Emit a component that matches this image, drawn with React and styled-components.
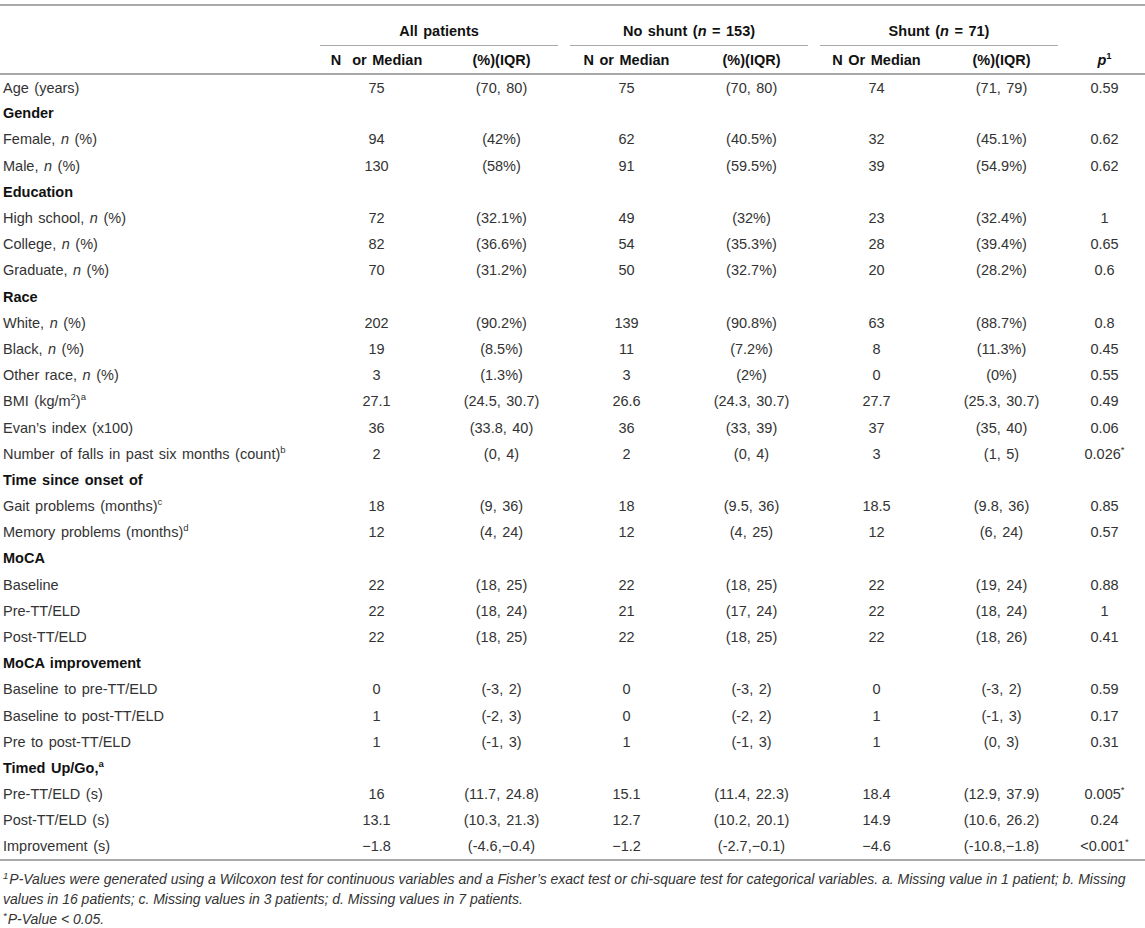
import React from 'react'
import styled, { createGlobalStyle } from 'styled-components'

const Global = createGlobalStyle`
  html, body { margin: 0; padding: 0; background: #fff; }
  body { font-family: "Liberation Sans", Arial, Helvetica, sans-serif; color: #333; }
`

const Page = styled.div`
  width: 1145px;
  padding-top: 4px;
`

const Table = styled.table`
  width: 1145px;
  border-collapse: collapse;
  table-layout: fixed;
  border-top: 2px solid #a9a9a9;
  border-bottom: 2px solid #a9a9a9;
  font-size: 14.5px;
  word-spacing: 1.5px;
`

const Head = styled.thead`
  border-bottom: 2px solid #a9a9a9;
`

const GroupCell = styled.th`
  height: 40px;
  padding: 0;
  vertical-align: bottom;
  font-weight: bold;
  color: #111;
`

const GroupTitle = styled.div`
  margin: 0 ${p => p.$gap || 6}px;
  padding-bottom: 4px;
  border-bottom: ${p => (p.$line ? '1px solid #a9a9a9' : 'none')};
  text-align: center;
  line-height: 20px;
`

const SubCell = styled.th`
  height: 27px;
  padding: 0;
  font-weight: bold;
  color: #111;
  text-align: center;
  vertical-align: middle;
`

const Row = styled.tr`
  height: 26.2px;
`

const Label = styled.td`
  padding: 0 3px;
  white-space: nowrap;
  color: ${p => (p.$section ? '#111' : '#333')};
  font-weight: ${p => (p.$section ? 'bold' : 'normal')};
`

const Value = styled.td`
  padding: 0;
  text-align: center;
  white-space: nowrap;
`

const Sup = styled.sup`
  font-size: 9.5px;
  line-height: 0;
  vertical-align: ${p => p.$v || '6px'};
  margin-right: ${p => p.$gap || 0}px;
`

const Notes = styled.div`
  padding: 8px 3px 0;
  font-size: 14px;
  font-style: italic;
  line-height: 20px;
  color: #333;
`

const N = () => <i>n</i>

const rows = [
  { label: 'Age (years)', v: ['75', '(70, 80)', '75', '(70, 80)', '74', '(71, 79)', '0.59'] },
  { section: 'Gender' },
  { label: <>Female, <N /> (%)</>, v: ['94', '(42%)', '62', '(40.5%)', '32', '(45.1%)', '0.62'] },
  { label: <>Male, <N /> (%)</>, v: ['130', '(58%)', '91', '(59.5%)', '39', '(54.9%)', '0.62'] },
  { section: 'Education' },
  { label: <>High school, <N /> (%)</>, v: ['72', '(32.1%)', '49', '(32%)', '23', '(32.4%)', '1'] },
  { label: <>College, <N /> (%)</>, v: ['82', '(36.6%)', '54', '(35.3%)', '28', '(39.4%)', '0.65'] },
  { label: <>Graduate, <N /> (%)</>, v: ['70', '(31.2%)', '50', '(32.7%)', '20', '(28.2%)', '0.6'] },
  { section: 'Race' },
  { label: <>White, <N /> (%)</>, v: ['202', '(90.2%)', '139', '(90.8%)', '63', '(88.7%)', '0.8'] },
  { label: <>Black, <N /> (%)</>, v: ['19', '(8.5%)', '11', '(7.2%)', '8', '(11.3%)', '0.45'] },
  { label: <>Other race, <N /> (%)</>, v: ['3', '(1.3%)', '3', '(2%)', '0', '(0%)', '0.55'] },
  { label: <>BMI (kg/m<Sup>2</Sup>)<Sup>a</Sup></>, v: ['27.1', '(24.5, 30.7)', '26.6', '(24.3, 30.7)', '27.7', '(25.3, 30.7)', '0.49'] },
  { label: 'Evan’s index (x100)', v: ['36', '(33.8, 40)', '36', '(33, 39)', '37', '(35, 40)', '0.06'] },
  { label: <>Number of falls in past six months (count)<Sup>b</Sup></>, v: ['2', '(0, 4)', '2', '(0, 4)', '3', '(1, 5)', <>0.026<Sup>*</Sup></>] },
  { section: 'Time since onset of' },
  { label: <>Gait problems (months)<Sup>c</Sup></>, v: ['18', '(9, 36)', '18', '(9.5, 36)', '18.5', '(9.8, 36)', '0.85'] },
  { label: <>Memory problems (months)<Sup>d</Sup></>, v: ['12', '(4, 24)', '12', '(4, 25)', '12', '(6, 24)', '0.57'] },
  { section: 'MoCA' },
  { label: 'Baseline', v: ['22', '(18, 25)', '22', '(18, 25)', '22', '(19, 24)', '0.88'] },
  { label: 'Pre-TT/ELD', v: ['22', '(18, 24)', '21', '(17, 24)', '22', '(18, 24)', '1'] },
  { label: 'Post-TT/ELD', v: ['22', '(18, 25)', '22', '(18, 25)', '22', '(18, 26)', '0.41'] },
  { section: 'MoCA improvement' },
  { label: 'Baseline to pre-TT/ELD', v: ['0', '(-3, 2)', '0', '(-3, 2)', '0', '(-3, 2)', '0.59'] },
  { label: 'Baseline to post-TT/ELD', v: ['1', '(-2, 3)', '0', '(-2, 2)', '1', '(-1, 3)', '0.17'] },
  { label: 'Pre to post-TT/ELD', v: ['1', '(-1, 3)', '1', '(-1, 3)', '1', '(0, 3)', '0.31'] },
  { section: <>Timed Up/Go,<Sup>a</Sup></> },
  { label: 'Pre-TT/ELD (s)', v: ['16', '(11.7, 24.8)', '15.1', '(11.4, 22.3)', '18.4', '(12.9, 37.9)', <>0.005<Sup>*</Sup></>] },
  { label: 'Post-TT/ELD (s)', v: ['13.1', '(10.3, 21.3)', '12.7', '(10.2, 20.1)', '14.9', '(10.6, 26.2)', '0.24'] },
  { label: 'Improvement (s)', v: ['−1.8', '(-4.6,−0.4)', '−1.2', '(-2.7,−0.1)', '−4.6', '(-10.8,−1.8)', <>&lt;0.001<Sup>*</Sup></>] },
]

const widths = [314, 125, 125, 125, 125, 125, 125, 81]

export default function App() {
  return (
    <Page>
      <Global />
      <Table>
        <colgroup>
          {widths.map((w, i) => <col key={i} style={{ width: w }} />)}
        </colgroup>
        <Head>
          <tr>
            <GroupCell />
            <GroupCell colSpan={2}><GroupTitle $line>All patients</GroupTitle></GroupCell>
            <GroupCell colSpan={2}><GroupTitle $line>No shunt (<i>n</i> = 153)</GroupTitle></GroupCell>
            <GroupCell colSpan={2}><GroupTitle $line>Shunt (<i>n</i> = 71)</GroupTitle></GroupCell>
            <GroupCell />
          </tr>
          <tr>
            <SubCell />
            <SubCell>N&nbsp; or Median</SubCell>
            <SubCell>(%)(IQR)</SubCell>
            <SubCell>N or Median</SubCell>
            <SubCell>(%)(IQR)</SubCell>
            <SubCell>N Or Median</SubCell>
            <SubCell>(%)(IQR)</SubCell>
            <SubCell><i>p</i><Sup>1</Sup></SubCell>
          </tr>
        </Head>
        <tbody>
          {rows.map((r, i) =>
            r.section ? (
              <Row key={i}><Label $section colSpan={8}>{r.section}</Label></Row>
            ) : (
              <Row key={i}>
                <Label>{r.label}</Label>
                {r.v.map((v, j) => <Value key={j}>{v}</Value>)}
              </Row>
            )
          )}
        </tbody>
      </Table>
      <Notes>
        <div>
          <Sup $v="5px" $gap={1}>1</Sup>P-Values were generated using a Wilcoxon test for continuous variables and a Fisher’s exact test or chi-square test for categorical variables. a. Missing value in 1 patient; b. Missing values in 16 patients; c. Missing values in 3 patients; d. Missing values in 7 patients.
        </div>
        <div><Sup $v="5px" $gap={1}>*</Sup>P-Value &lt; 0.05.</div>
      </Notes>
    </Page>
  )
}
